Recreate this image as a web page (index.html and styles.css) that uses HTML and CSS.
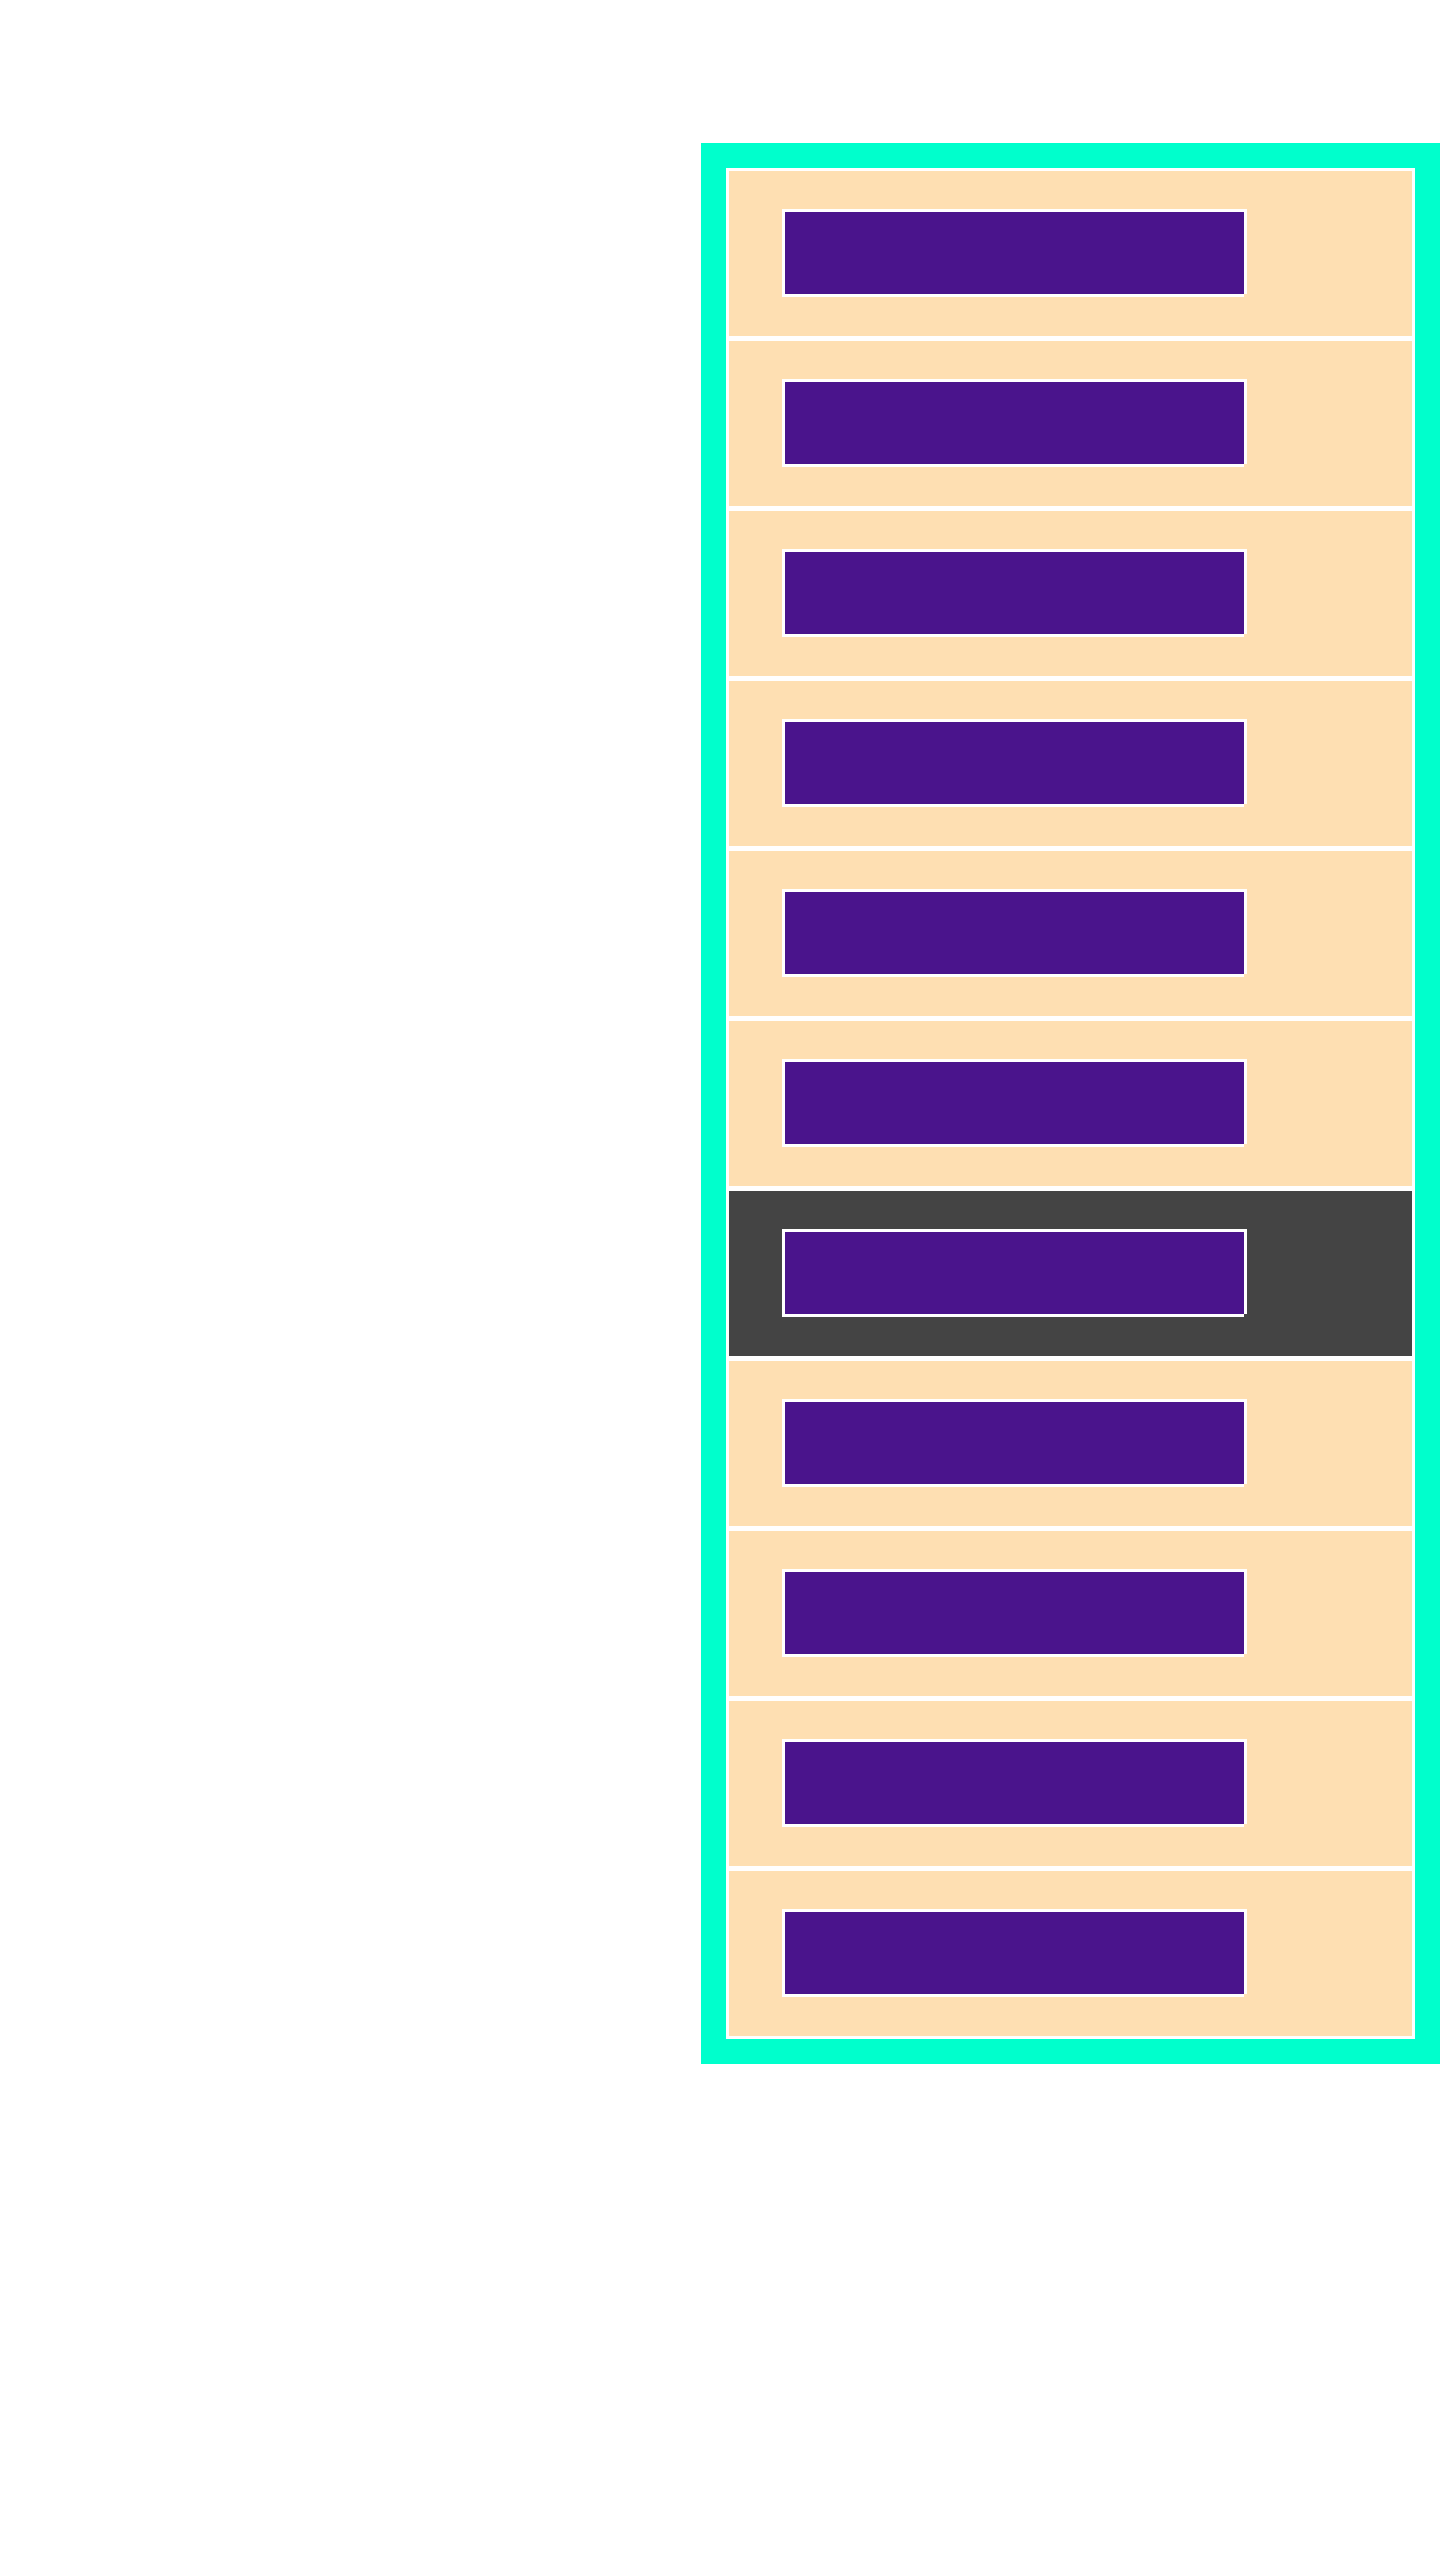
FILE: index.html
```html
<!DOCTYPE html>
<html lang="en">
<head>
<meta charset="utf-8">
<title>List</title>
<link rel="stylesheet" href="styles.css">
</head>
<body>
<ul class="panel">
  <li class="item"><span class="bar"></span></li>
  <li class="item"><span class="bar"></span></li>
  <li class="item"><span class="bar"></span></li>
  <li class="item"><span class="bar"></span></li>
  <li class="item"><span class="bar"></span></li>
  <li class="item"><span class="bar"></span></li>
  <li class="item item--active"><span class="bar"></span></li>
  <li class="item"><span class="bar"></span></li>
  <li class="item"><span class="bar"></span></li>
  <li class="item"><span class="bar"></span></li>
  <li class="item"><span class="bar"></span></li>
</ul>
</body>
</html>
```

FILE: styles.css
```css
html, body {
  margin: 0;
  padding: 0;
  background: #ffffff;
}

body {
  font-family: "Liberation Sans", Arial, sans-serif;
}

.panel {
  list-style: none;
  box-sizing: border-box;
  width: 739px;
  margin: 143px 0 0 auto;
  padding: 0 0 3px 0;
  border: 25px solid #00ffcc;
  display: flex;
  flex-direction: column;
  gap: 2px;
}

.item {
  position: relative;
  box-sizing: border-box;
  height: 168px;
  padding: 38px 0 0 53px;
  background: #fedfb2;
  border: 3px solid #ffffff;
  border-bottom: 0;
}

.item::after {
  content: "";
  position: absolute;
  left: -3px;
  right: 0;
  bottom: -3px;
  height: 3px;
  background: #ffffff;
}

.item--active {
  background: #444444;
}

.bar {
  position: relative;
  display: block;
  box-sizing: border-box;
  width: 465px;
  height: 85px;
  background: #4a148c;
  border: 3px solid #ffffff;
  border-bottom: 0;
}

.bar::after {
  content: "";
  position: absolute;
  left: -3px;
  right: 0;
  bottom: -3px;
  height: 3px;
  background: #ffffff;
}
```
